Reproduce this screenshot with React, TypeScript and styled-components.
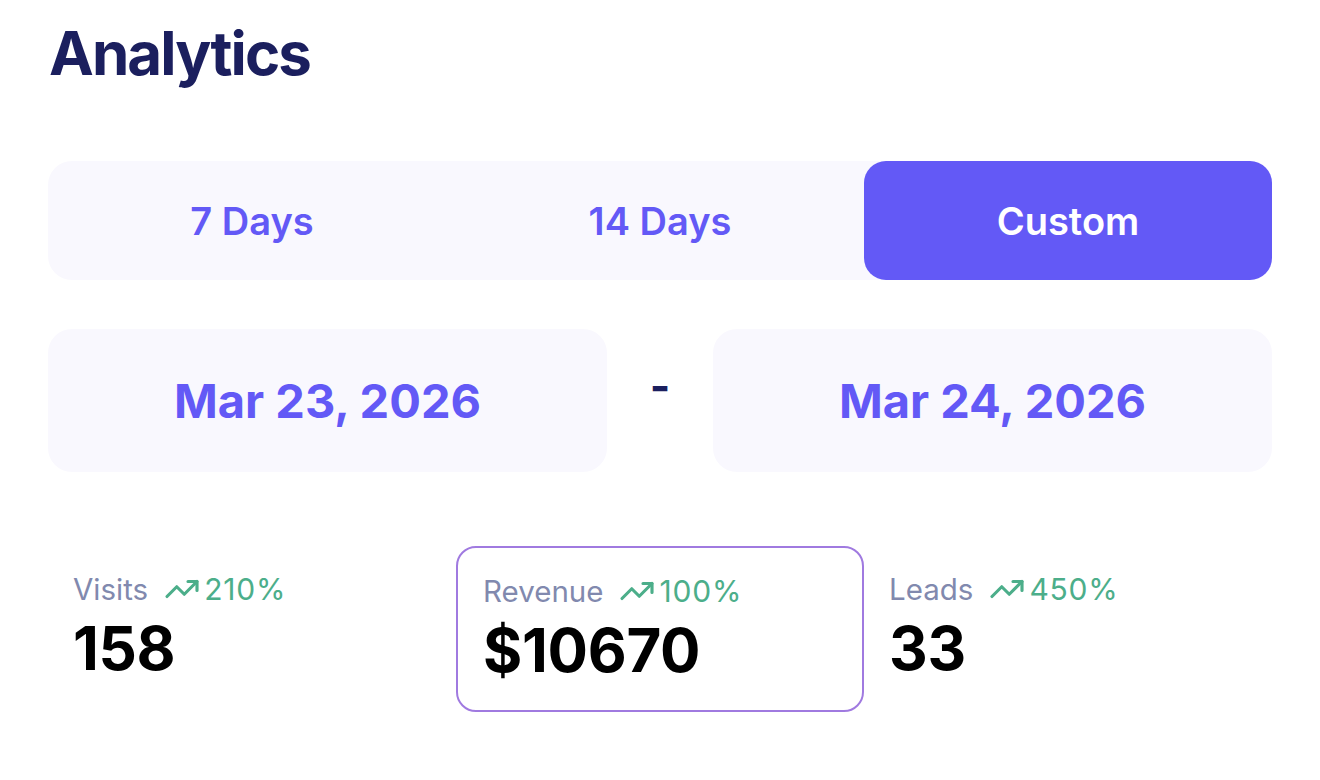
import React, { useState } from "react";
import styled, { createGlobalStyle } from "styled-components";
import { TrendingUp } from "lucide-react";

const GlobalStyle = createGlobalStyle`
  body {
    margin: 0;
    background: #ffffff;
    font-family: Inter, "Noto Sans", sans-serif;
  }
`;

// Page
const Page = styled.div`
  padding: 15px 48px 0 48px;
`;

const Title = styled.h1`
  margin: 0 0 69px 1px;
  font-size: 60px;
  line-height: 77px;
  font-weight: 700;
  color: #1b1f5e;
  letter-spacing: -1.9px;
`;

// Range tabs
const Tabs = styled.div`
  display: grid;
  grid-template-columns: repeat(3, 1fr);
  height: 119px;
  background: #f9f8fe;
  border-radius: 24px;
`;

const Tab = styled.button<{ $active: boolean }>`
  border: none;
  cursor: pointer;
  font-family: inherit;
  font-size: 38px;
  font-weight: 600;
  border-radius: 22px;
  background: ${(p) => (p.$active ? "#6359f6" : "transparent")};
  color: ${(p) => (p.$active ? "#ffffff" : "#6359f6")};
`;

// Dates
const DateRow = styled.div`
  display: grid;
  grid-template-columns: 1fr 106px 1fr;
  margin-top: 49px;
  height: 143px;
`;

const DateBox = styled.div`
  display: flex;
  align-items: center;
  justify-content: center;
  background: #f9f8fe;
  border-radius: 24px;
  font-size: 47px;
  font-weight: 700;
  color: #6359f6;
`;

const Dash = styled.div`
  display: flex;
  justify-content: center;
  padding-top: 30px;
  font-size: 44px;
  font-weight: 700;
  color: #1b1f5e;
`;

// Stats
const Stats = styled.div`
  display: grid;
  grid-template-columns: repeat(3, 1fr);
  margin-top: 74px;
`;

const Stat = styled.div<{ $selected: boolean }>`
  border: ${(p) => (p.$selected ? "2px solid #a07ae0" : "none")};
  border-radius: 20px;
  padding: 27px 25px 24px 25px;
`;

const LabelRow = styled.div`
  display: flex;
  align-items: center;
  height: 32px;
  margin-bottom: 7px;
`;

const Label = styled.span`
  font-size: 29.5px;
  color: #8189ae;
  margin-right: 16px;
`;

const Change = styled.span`
  display: flex;
  align-items: center;
  gap: 4px;
  font-size: 30px;
  color: #4cae8a;
  letter-spacing: 0.8px;
`;

const Value = styled.div`
  font-size: 60px;
  line-height: 72px;
  font-weight: 700;
  color: #000000;
  letter-spacing: -0.3px;
`;

const ranges = ["7 Days", "14 Days", "Custom"];

const stats = [
  { label: "Visits", change: "210%", value: "158" },
  { label: "Revenue", change: "100%", value: "$10670" },
  { label: "Leads", change: "450%", value: "33" },
];

export default function App() {
  const [range, setRange] = useState("Custom");
  const [selected, setSelected] = useState("Revenue");

  return (
    <Page>
      <GlobalStyle />
      <Title>Analytics</Title>

      <Tabs>
        {ranges.map((r) => (
          <Tab key={r} $active={r === range} onClick={() => setRange(r)}>
            {r}
          </Tab>
        ))}
      </Tabs>

      <DateRow>
        <DateBox>Mar 23, 2026</DateBox>
        <Dash>-</Dash>
        <DateBox>Mar 24, 2026</DateBox>
      </DateRow>

      <Stats>
        {stats.map((s) => (
          <Stat
            key={s.label}
            $selected={s.label === selected}
            onClick={() => setSelected(s.label)}
          >
            <LabelRow>
              <Label>{s.label}</Label>
              <Change>
                <TrendingUp size={36} strokeWidth={2.1} />
                {s.change}
              </Change>
            </LabelRow>
            <Value>{s.value}</Value>
          </Stat>
        ))}
      </Stats>
    </Page>
  );
}
